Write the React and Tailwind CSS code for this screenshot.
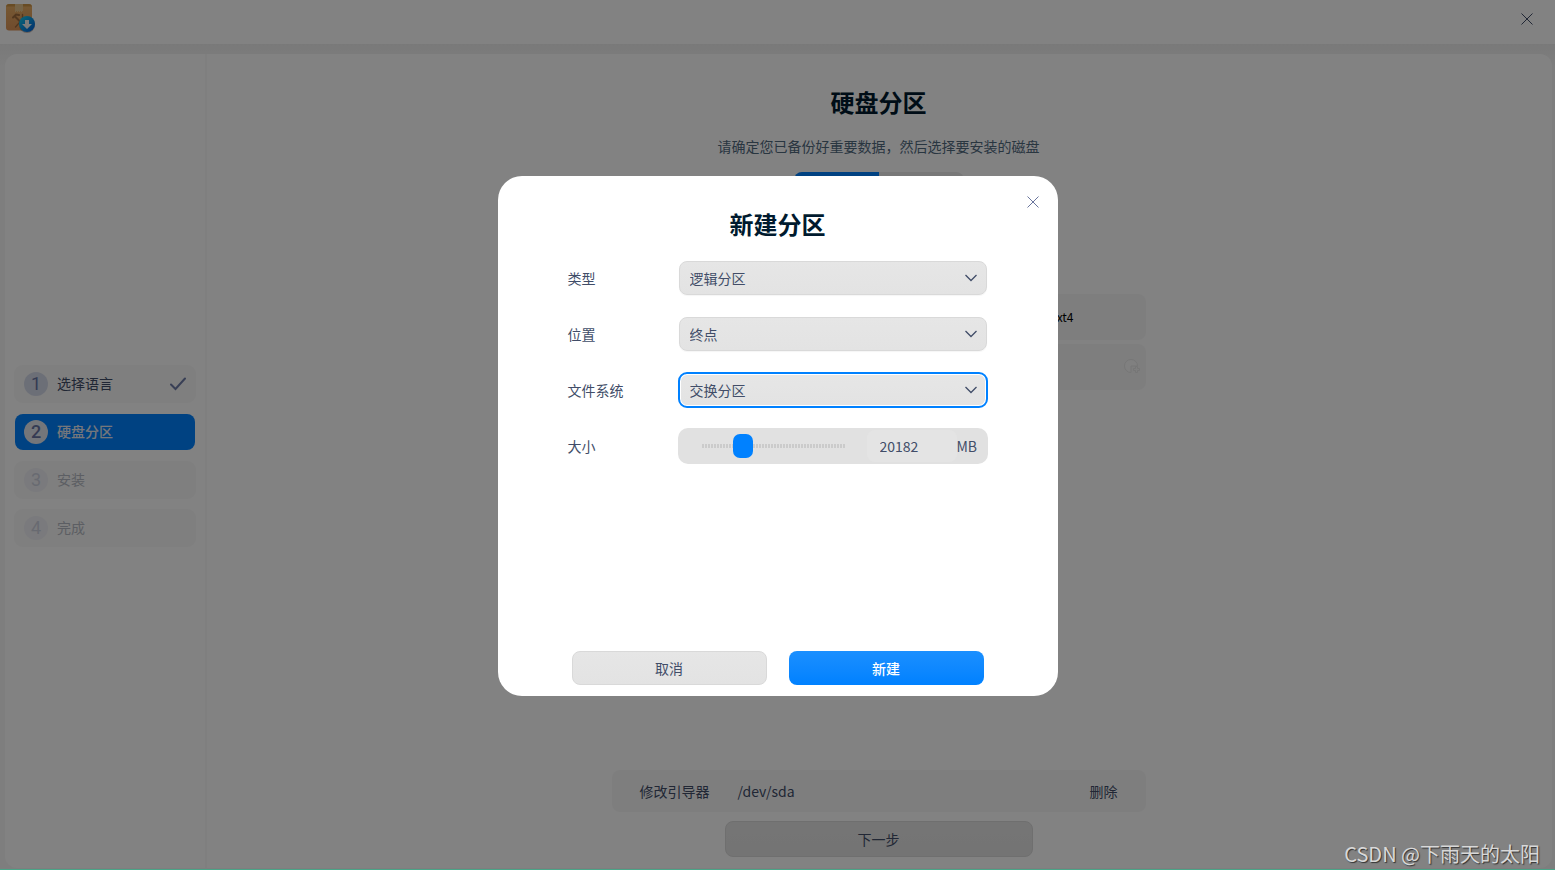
import { useState } from 'react';
import clsx from 'clsx';

const steps = [
  { id: 1, label: '选择语言', state: 'done' },
  { id: 2, label: '硬盘分区', state: 'active' },
  { id: 3, label: '安装', state: 'pending' },
  { id: 4, label: '完成', state: 'pending' }
];

const fields = [
  { id: 'type', label: '类型', options: ['逻辑分区', '主分区'] },
  { id: 'position', label: '位置', options: ['终点', '起点'] },
  { id: 'filesystem', label: '文件系统', options: ['交换分区', 'ext4'], focused: true }
];

function AppLogo() {
  return (
    <svg width="32" height="32" viewBox="0 0 32 32" aria-hidden="true">
      <defs>
        <linearGradient id="box" x1="0" y1="0" x2="0" y2="1">
          <stop offset="0" stopColor="#e8b066" />
          <stop offset="1" stopColor="#dc9458" />
        </linearGradient>
        <linearGradient id="badge" x1="0" y1="0" x2="1" y2="1">
          <stop offset="0" stopColor="#16d0ee" />
          <stop offset="1" stopColor="#0058d8" />
        </linearGradient>
      </defs>
      <rect x="2" y="1" width="26" height="26.500" rx="3" fill="url(#box)" />
      <path d="M5 1h20a3 3 0 0 1 3 2.500H2A3 3 0 0 1 5 1z" fill="#cc9648" />
      <path d="M11 1h8v7h-1v1h-1v-1h-1v1h-1v-1h-1v1h-1v-1h-1v1h-1z" fill="#e6c48e" />
      <g fill="none" stroke="#a06c3e" strokeLinecap="round">
        <path d="M9 14.500l3-3 3 .5M11.500 14l9 9" strokeWidth="2" />
        <path d="M19.500 15l-8 9M18.500 11.500v3l2 1.500 2.500-.5" strokeWidth="1.400" />
      </g>
      <circle cx="23" cy="22" r="8" fill="#5c3a28" opacity="0.35" />
      <circle cx="23" cy="21" r="8" fill="url(#badge)" />
      <path d="M21 17h4v4h3l-5 5-5-5h3z" fill="#f4f4f4" />
    </svg>
  );
}

function CloseIcon() {
  return (
    <svg width="12" height="12" viewBox="0 0 12 12" fill="none" stroke="currentColor" aria-hidden="true">
      <path d="M.5.5l11 11M11.500.5l-11 11" />
    </svg>
  );
}

function Step({ step }) {
  return (
    <li
      aria-current={step.state === 'active' ? 'step' : undefined}
      className={clsx(
        'flex h-9 items-center rounded-lg px-[9px] text-sm',
        step.state === 'done' && 'bg-[#f9f9f9] text-[#414d68] ring-1 ring-[#f9f9f9]',
        step.state === 'active' && 'bg-[#0081ff] font-medium text-[#e6e9f2]',
        step.state === 'pending' && 'bg-[#f9f9f9] text-[#b4b8c2] ring-1 ring-[#f9f9f9]'
      )}
    >
      <span
        className={clsx(
          'grid size-6 place-items-center rounded-full font-[Roboto] text-lg leading-6',
          step.state === 'done' && 'bg-[#d5daea] text-[#6875a3]',
          step.state === 'active' && 'bg-[#e4e7f0] text-[#6875a3]',
          step.state === 'pending' && 'bg-[#eff0f5] text-[#cdd1de]'
        )}
      >
        {step.id}
      </span>
      <span className="ml-[9px] flex-1 pb-0.5">{step.label}</span>
      {step.state === 'done' && (
        <svg width="16" height="14" viewBox="0 0 16 14" fill="none" stroke="#6f7ca8" strokeWidth="2" aria-hidden="true">
          <path d="M1 7.500l4.500 4.500L15 1.500" strokeLinecap="round" />
        </svg>
      )}
    </li>
  );
}

function SelectField({ field }) {
  return (
    <div className="flex h-9 items-center justify-between">
      <label htmlFor={field.id}>{field.label}</label>
      <div className="relative w-[310px] p-px">
        <select
          id={field.id}
          className={clsx(
            'block h-[34px] w-full appearance-none rounded-lg bg-linear-to-b from-[#e6e6e6] to-[#e3e3e3]',
            field.focused
              ? 'border-2 border-white pl-[9px] outline-2 -outline-offset-1 outline-[#0081ff]'
              : 'border border-[#d9d9d9] pl-[10px] shadow-[0_1px_1px_#0000000a]'
          )}
        >
          {field.options.map((option) => <option key={option}>{option}</option>)}
        </select>
        <svg className="pointer-events-none absolute top-3.5 right-[10px]" width="14" height="8" viewBox="0 0 14 8" fill="none" stroke="#414d68" strokeWidth="1.300" aria-hidden="true">
          <path d="M1.500 1l5.500 5.500L12.500 1" />
        </svg>
      </div>
    </div>
  );
}

function SizeField() {
  const [size, setSize] = useState(20182);

  return (
    <div className="flex h-9 items-center justify-between">
      <label htmlFor="size">大小</label>
      <div className="flex h-9 w-[310px] items-center rounded-[10px] bg-[#e1e1e1] pr-[10px] pl-6">
        <input
          type="range"
          min="0"
          max="80000"
          value={size}
          onChange={(event) => setSize(event.target.value)}
          aria-label="大小"
          className="h-6 w-[143px] appearance-none bg-transparent [&::-webkit-slider-runnable-track]:h-1 [&::-webkit-slider-runnable-track]:bg-[repeating-linear-gradient(90deg,#cbcbcb_0_2px,transparent_2px_3px)] [&::-webkit-slider-thumb]:-mt-[10px] [&::-webkit-slider-thumb]:h-6 [&::-webkit-slider-thumb]:w-5 [&::-webkit-slider-thumb]:appearance-none [&::-webkit-slider-thumb]:rounded-[7px] [&::-webkit-slider-thumb]:bg-[#0081ff]"
        />
        <input
          id="size"
          type="text"
          value={size}
          onChange={(event) => setSize(event.target.value)}
          className="ml-[22px] h-8 w-[90px] rounded-lg bg-[#e4e4e4] px-[13px]"
        />
        <span>MB</span>
      </div>
    </div>
  );
}

function NewPartitionDialog() {
  return (
    <section role="dialog" aria-labelledby="dialog-title" className="flex h-[520px] w-[560px] flex-col rounded-3xl bg-white pb-[11px] text-sm text-[#414d68]">
      <div className="flex h-8 items-end justify-end pr-[19px]">
        <button type="button" aria-label="关闭" className="text-[#6a759c]"><CloseIcon /></button>
      </div>
      <h2 id="dialog-title" className="text-center text-2xl font-bold text-[#001a2e]">新建分区</h2>
      <form id="partition" className="mt-5 flex flex-1 flex-col gap-5 px-[70px]">
        {fields.map((field) => <SelectField key={field.id} field={field} />)}
        <SizeField />
      </form>
      <div className="flex justify-center gap-[22px]">
        <button type="button" className="h-[34px] w-[195px] rounded-lg border border-[#d9d9d9] bg-linear-to-b from-[#e6e6e6] to-[#e3e3e3]">取消</button>
        <button type="submit" form="partition" className="h-[34px] w-[195px] rounded-lg bg-linear-to-b from-[#1a8fff] to-[#0081ff] font-medium text-white">新建</button>
      </div>
    </section>
  );
}

function DiskPage() {
  return (
    <main className="flex flex-1 flex-col items-center rounded-r-xl bg-white pt-8 pr-0.5 pb-[11px] text-sm text-[#414d68]">
      <h1 className="text-2xl font-bold text-[#001a2e]">硬盘分区</h1>
      <p className="mt-[18px] leading-5 text-[#526a7f]">请确定您已备份好重要数据，然后选择要安装的磁盘</p>
      <div className="mt-4 flex h-9 w-[170px] overflow-hidden rounded-lg bg-[#ebebeb]">
        <div className="w-1/2 bg-[#0081ff]" />
      </div>
      <ul className="mt-[86px] flex w-[534px] flex-col gap-1">
        <li className="flex h-[46px] items-center justify-end rounded-lg bg-[#f8f8f8] pr-[72px] text-xs text-black">ext4</li>
        <li className="flex h-[46px] items-center justify-end rounded-lg bg-[#f8f8f8] pr-[5px]">
          <svg width="18" height="18" viewBox="0 0 18 18" fill="none" stroke="#e8e8e8" aria-hidden="true">
            <path d="M8 14.500A6.500 6.500 0 1 1 14.500 8H8z" fill="#fcfcfc" />
            <path d="M10.500 10.500h2v-2h2v2h2v2h-2v2h-2v-2h-2z" />
          </svg>
        </li>
      </ul>
      <div className="mt-auto flex h-[42px] w-[534px] items-center rounded-lg bg-[#f8f8f8] px-7">
        <span>修改引导器</span>
        <span className="ml-7 flex-1">/dev/sda</span>
        <button type="button">删除</button>
      </div>
      <button type="button" className="mt-[9px] h-9 w-[308px] rounded-lg border border-[#d9d9d9] bg-linear-to-b from-[#e6e6e6] to-[#e3e3e3]">下一步</button>
    </main>
  );
}

export default function App() {
  return (
    <div className="relative flex min-h-screen flex-col bg-white pb-[3px] font-['Noto_Sans_CJK_SC',sans-serif]">
      <div className="relative flex flex-1 flex-col border-b border-[#4aa588] bg-white">
        <header className="flex h-11 items-center justify-between pr-[22px] pl-1">
          <div className="pb-1.5"><AppLogo /></div>
          <button type="button" aria-label="关闭窗口" className="pb-1.5 text-[#414d68]"><CloseIcon /></button>
        </header>
        <div className="flex flex-1 bg-linear-to-b from-[#eeeeee] to-[#f8f8f8] to-[24px] pt-[10px] pr-[3px] pb-px pl-[5px]">
          <aside className="flex w-[200px] flex-col justify-center rounded-l-xl bg-white px-[10px] pb-2.5">
            <ol className="flex flex-col gap-3">
              {steps.map((step) => <Step key={step.id} step={step} />)}
            </ol>
          </aside>
          <div className="w-0.5 bg-[#f9f9f9]" />
          <DiskPage />
        </div>
        <div className="absolute inset-0 bg-black/49" />
      </div>
      <div className="absolute inset-0 flex items-center justify-center pb-0.5">
        <NewPartitionDialog />
      </div>
      <p className="absolute right-[15px] bottom-[5px] text-xl text-[#d8d8d8] [text-shadow:1px_1px_1px_#333333]">CSDN @下雨天的太阳</p>
    </div>
  );
}
